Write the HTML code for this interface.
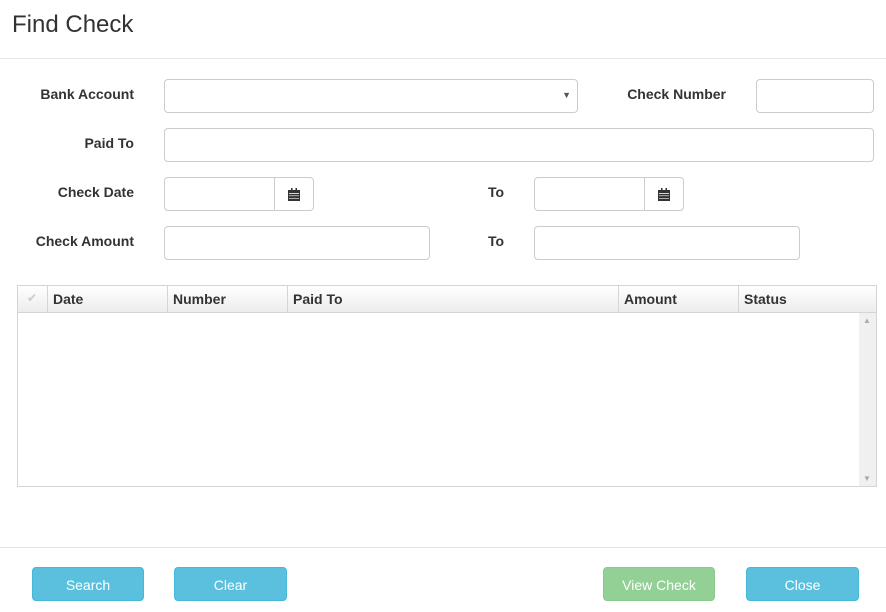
<!DOCTYPE html>
<html><head><style>
*{box-sizing:border-box;margin:0;padding:0}
body{width:886px;height:612px;background:#fff;font-family:"Liberation Sans",Arial,sans-serif;position:relative;overflow:hidden;color:#333}
.a{position:absolute}
.lbl{position:absolute;font-weight:bold;font-size:14px;text-align:right;color:#333}
.in{position:absolute;border:1px solid #ccc;border-radius:4px;background:#fff;height:34px}
.add{position:absolute;border:1px solid #ccc;border-radius:0 4px 4px 0;background:#fff;height:34px;width:40px}
.th{position:absolute;top:0;height:27px;line-height:27px;font-weight:bold;font-size:14px;padding-left:5px;border-left:1px solid #d5d5d5;color:#333}
.btn{position:absolute;top:567px;height:34px;border-radius:4px;color:#fff;font-size:14px;text-align:center;line-height:34px;background:#5bc0de;border:1px solid #46b8da}
</style></head><body>
<div class="a" style="left:12px;top:11px;font-size:24px;color:#333">Find Check</div>
<div class="a" style="left:0;top:58px;width:886px;height:1px;background:#e5e5e5"></div>

<div class="lbl" style="right:752px;top:86px">Bank Account</div>
<div class="in" style="left:164px;top:79px;width:414px"><span class="a" style="right:6px;top:10px;font-size:9px;color:#555">▼</span></div>
<div class="lbl" style="right:160px;top:86px">Check Number</div>
<div class="in" style="left:756px;top:79px;width:118px"></div>

<div class="lbl" style="right:752px;top:135px">Paid To</div>
<div class="in" style="left:164px;top:128px;width:710px"></div>

<div class="lbl" style="right:752px;top:184px">Check Date</div>
<div class="in" style="left:164px;top:177px;width:111px;border-radius:4px 0 0 4px"></div>
<div class="add" style="left:274px;top:177px"><svg class="a" style="left:13px;top:10px" width="12" height="13" viewBox="0 0 12 13"><rect x="0" y="2" width="12" height="11" fill="#333"/><rect x="3" y="0" width="1.5" height="3" fill="#333"/><rect x="7.5" y="0" width="1.5" height="3" fill="#333"/><g fill="#fff"><rect x="1" y="5" width="10" height="0.8"/><rect x="1" y="7.5" width="10" height="0.6"/><rect x="1" y="10" width="10" height="0.6"/></g></svg></div>
<div class="lbl" style="left:488px;top:184px">To</div>
<div class="in" style="left:534px;top:177px;width:111px;border-radius:4px 0 0 4px"></div>
<div class="add" style="left:644px;top:177px"><svg class="a" style="left:13px;top:10px" width="12" height="13" viewBox="0 0 12 13"><rect x="0" y="2" width="12" height="11" fill="#333"/><rect x="3" y="0" width="1.5" height="3" fill="#333"/><rect x="7.5" y="0" width="1.5" height="3" fill="#333"/><g fill="#fff"><rect x="1" y="5" width="10" height="0.8"/><rect x="1" y="7.5" width="10" height="0.6"/><rect x="1" y="10" width="10" height="0.6"/></g></svg></div>

<div class="lbl" style="right:752px;top:233px">Check Amount</div>
<div class="in" style="left:164px;top:226px;width:266px"></div>
<div class="lbl" style="left:488px;top:233px">To</div>
<div class="in" style="left:534px;top:226px;width:266px"></div>

<div class="a" style="left:17px;top:285px;width:860px;height:202px;border:1px solid #d5d5d5">
 <div class="a" style="left:0;top:0;width:858px;height:27px;background:linear-gradient(#fff,#ececec);border-bottom:1px solid #d5d5d5">
  <span class="a" style="left:9px;top:5px;color:#ccc;font-size:12px">✔</span>
  <div class="th" style="left:29px;width:120px">Date</div>
  <div class="th" style="left:149px;width:120px">Number</div>
  <div class="th" style="left:269px;width:331px">Paid To</div>
  <div class="th" style="left:600px;width:120px">Amount</div>
  <div class="th" style="left:720px;width:138px">Status</div>
 </div>
 <div class="a" style="left:841px;top:27px;width:17px;height:173px;background:#f0f0f0">
  <span class="a" style="left:4px;top:3px;font-size:8px;color:#aaa">▲</span>
  <span class="a" style="left:4px;bottom:3px;font-size:8px;color:#aaa">▼</span>
 </div>
</div>

<div class="a" style="left:0;top:547px;width:886px;height:1px;background:#e5e5e5"></div>
<div class="btn" style="left:32px;width:112px">Search</div>
<div class="btn" style="left:174px;width:113px">Clear</div>
<div class="btn" style="left:603px;width:112px;background:#93d095;border-color:#8acb8c">View Check</div>
<div class="btn" style="left:746px;width:113px">Close</div>
</body></html>
